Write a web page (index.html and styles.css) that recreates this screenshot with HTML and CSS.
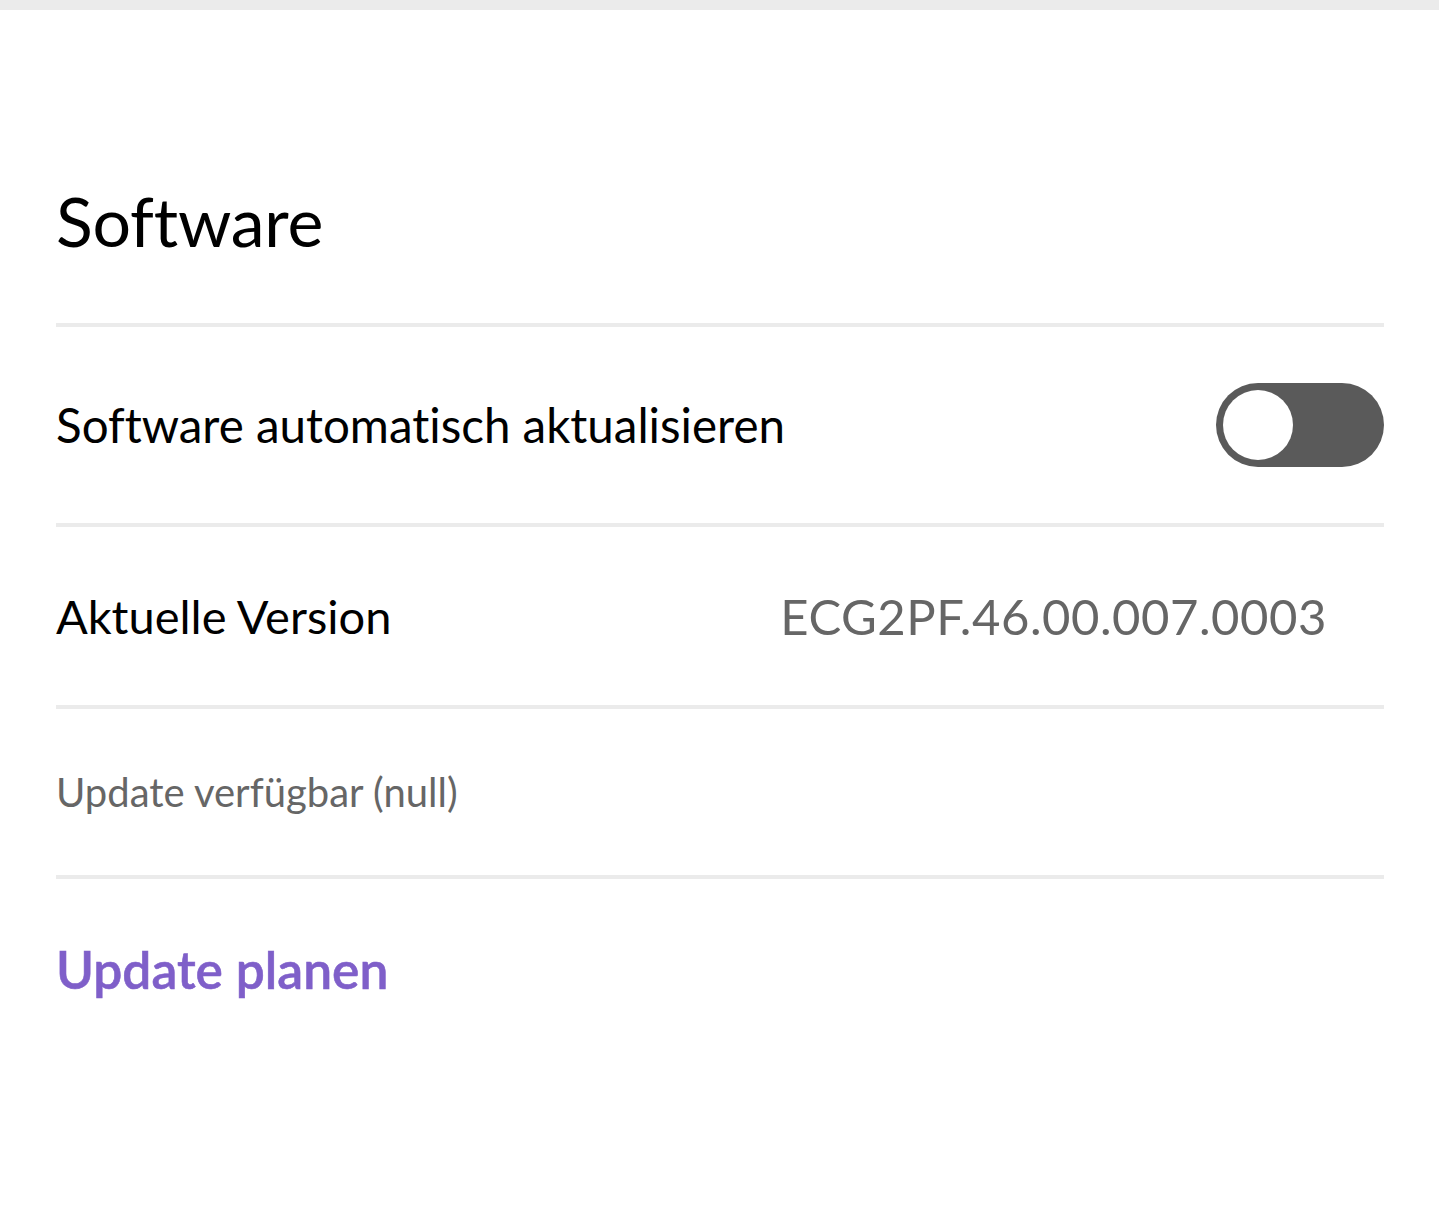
FILE: index.html
```html
<!DOCTYPE html>
<html lang="de">
<head>
<meta charset="utf-8">
<title>Software</title>
<link rel="stylesheet" href="styles.css">
</head>
<body>
<div class="topbar"></div>
<main class="page">
  <header class="title-block">
    <h1 class="title">Software</h1>
  </header>
  <div class="divider"></div>
  <div class="row row-toggle">
    <span class="label">Software automatisch aktualisieren</span>
    <span class="toggle"><span class="knob"></span></span>
  </div>
  <div class="divider"></div>
  <div class="row row-version">
    <span class="label">Aktuelle Version</span>
    <span class="value">ECG2PF.46.00.007.0003</span>
  </div>
  <div class="divider"></div>
  <div class="row row-update">
    <span class="sublabel">Update verfügbar (null)</span>
  </div>
  <div class="divider"></div>
  <div class="action-row">
    <a class="action" href="#">Update planen</a>
  </div>
</main>
</body>
</html>
```

FILE: styles.css
```css
* { box-sizing: border-box; }
html, body { margin: 0; padding: 0; background: #ffffff; }
body {
  font-family: Lato, "Open Sans", sans-serif;
  font-variant-ligatures: none;
  color: #000;
  width: 1439px;
  height: 1205px;
  overflow: hidden;
}
.topbar { height: 10px; background: #ebebeb; }
.page { padding: 0 55px 0 56px; }
.title-block {
  height: 313px;
  display: flex;
  align-items: center;
  padding-top: 108px;
}
.title {
  margin: 0;
  font-weight: 400;
  font-size: 68px;
  line-height: 1;
  letter-spacing: -0.2px;
}
.divider { height: 4px; background: #ebebeb; }
.row {
  display: flex;
  align-items: center;
  justify-content: space-between;
}
.row-toggle { height: 196px; }
.row-version { height: 178px; }
.row-update { height: 166px; }
.label { font-size: 47.5px; line-height: 1; }
.row-version .label { font-size: 47px; }
.value {
  font-size: 49px;
  line-height: 1;
  color: #666666;
  letter-spacing: 0.55px;
  margin-right: 57px;
}
.sublabel { font-size: 40px; line-height: 1; color: #666666; }
.toggle {
  width: 168px;
  height: 84px;
  border-radius: 42px;
  background: #5a5a5a;
  display: flex;
  align-items: center;
  padding-left: 7px;
}
.knob {
  width: 70px;
  height: 70px;
  border-radius: 50%;
  background: #fff;
}
.action-row { padding-top: 65px; }
.action {
  font-size: 51.5px;
  line-height: 1;
  font-weight: 600;
  color: #7f5fc9;
  text-decoration: none;
  -webkit-text-stroke: 0.6px #7f5fc9;
}
```
